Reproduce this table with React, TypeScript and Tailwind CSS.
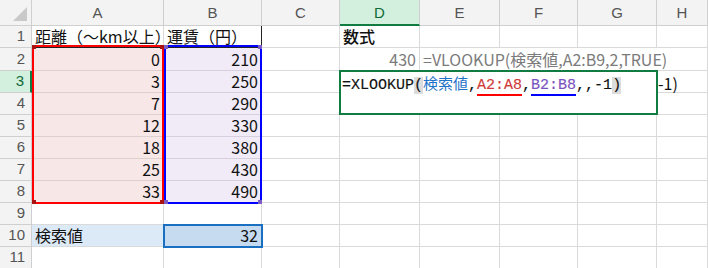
import React from "react";

const COLS = ["A", "B", "C", "D", "E", "F", "G", "H"];
const COL_W = [132, 98, 78, 80, 80, 78, 79, 51];
const ROW_H = [22, 23, 22, 22, 22, 22, 22, 22, 22, 22, 22];

const jp = "font-['Yu_Gothic','Noto_Sans_CJK_JP',sans-serif]";
const head = "font-['Liberation_Sans','Noto_Sans',sans-serif]";

type CellDef = { v?: React.ReactNode; right?: boolean; color?: string; cls?: string };

const Cell = ({ v, right, color = "text-[#111]", cls = "border-[#dadada]" }: CellDef) => (
  <div
    className={`relative flex items-end overflow-visible whitespace-nowrap border-b border-r px-[3px] pb-[1px] text-[16px] leading-[20px] ${jp} ${color} ${
      right ? "justify-end" : "justify-start"
    } ${cls}`}
  >
    {v}
  </div>
);

const pink = "bg-[#f8e7e7] border-[#dcd0d0]";
const lilac = "bg-[#f0ebf7] border-[#d6d0de]";

// cell contents keyed by "A1" style address
const cells: Record<string, CellDef> = {
  A1: { v: "距離（〜km以上）", cls: "border-[#dadada] border-b-[#222]" },
  B1: { v: "運賃（円）", cls: "border-[#222]" },
  D1: { v: "数式", color: "text-[#111] font-medium" },
  A2: { v: "0", right: true, cls: pink },
  A3: { v: "3", right: true, cls: pink },
  A4: { v: "7", right: true, cls: pink },
  A5: { v: "12", right: true, cls: pink },
  A6: { v: "18", right: true, cls: pink },
  A7: { v: "25", right: true, cls: pink },
  A8: { v: "33", right: true, cls: "bg-[#f8e7e7] border-[#dcd0d0] border-b-[#222]" },
  B2: { v: "210", right: true, cls: lilac },
  B3: { v: "250", right: true, cls: lilac },
  B4: { v: "290", right: true, cls: lilac },
  B5: { v: "330", right: true, cls: lilac },
  B6: { v: "380", right: true, cls: lilac },
  B7: { v: "430", right: true, cls: lilac },
  B8: { v: "490", right: true, cls: "bg-[#f0ebf7] border-[#d6d0de] border-b-[#222]" },
  D2: { v: "430", right: true, color: "text-[#7b7b7b]" },
  E2: {
    v: <span className="absolute bottom-[1px] left-[3px]">=VLOOKUP(検索値,A2:B9,2,TRUE)</span>,
    color: "text-[#7b7b7b]",
    cls: "border-[#dadada] border-r-transparent",
  },
  F2: { cls: "border-[#dadada] border-r-transparent" },
  G2: { cls: "border-[#dadada] border-r-transparent" },
  A10: { v: "検索値", cls: "bg-[#dce9f6] border-[#dadada]" },
  B10: { v: "32", right: true, cls: "bg-[#c6dbf0] border-[#dadada]" },
};

const Handles = ({ color }: { color: string }) => (
  <>
    <span className={`absolute -left-[2px] -top-[2px] h-[4px] w-[4px] ${color}`} />
    <span className={`absolute -right-[2px] -top-[2px] h-[4px] w-[4px] ${color}`} />
    <span className={`absolute -bottom-[2px] -left-[2px] h-[4px] w-[4px] ${color}`} />
    <span className={`absolute -bottom-[2px] -right-[2px] h-[4px] w-[4px] ${color}`} />
  </>
);

export default function App() {
  return (
    <div className="relative h-[268px] w-[708px] overflow-hidden bg-white">
      <div
        className="grid"
        style={{
          gridTemplateColumns: `32px ${COL_W.map((w) => `${w}px`).join(" ")}`,
          gridTemplateRows: `26px ${ROW_H.map((h) => `${h}px`).join(" ")}`,
        }}
      >
        {/* select-all corner */}
        <div className="relative border-b border-r border-[#cfcfcf] bg-[#f3f3f3]">
          <div className="absolute bottom-[4px] right-[4px] h-0 w-0 border-b-[14px] border-l-[14px] border-b-[#c9c9c9] border-l-transparent" />
        </div>
        {COLS.map((c) =>
          c === "D" ? (
            <div
              key={c}
              className={`flex items-center justify-center border-b-2 border-r border-b-[#107c41] border-r-[#cfcfcf] bg-[#d3efdd] pt-[2px] text-[15px] text-[#0f6b38] ${head}`}
            >
              {c}
            </div>
          ) : (
            <div
              key={c}
              className={`flex items-center justify-center border-b border-r border-[#cfcfcf] bg-[#f3f3f3] pt-[2px] text-[15px] text-[#555] ${head}`}
            >
              {c}
            </div>
          )
        )}
        {ROW_H.map((_, i) => {
          const r = i + 1;
          return (
            <React.Fragment key={r}>
              <div
                className={`flex items-center justify-end border-b pr-[6px] text-[15px] ${head} ${
                  r === 3
                    ? "border-r-2 border-[#cfcfcf] border-r-[#107c41] bg-[#d3efdd] text-[#0f6b38]"
                    : "border-r border-[#cfcfcf] bg-[#f3f3f3] text-[#555]"
                }`}
              >
                {r}
              </div>
              {COLS.map((c) => (
                <Cell key={c} {...cells[`${c}${r}`]} />
              ))}
            </React.Fragment>
          );
        })}
      </div>

      {/* reference outlines for A2:A8 and B2:B8 */}
      <div className="absolute left-[32px] top-[45px] h-[159px] w-[132px] border-2 border-[#ff0000]">
        <Handles color="bg-[#a11]" />
      </div>
      <div className="absolute left-[164px] top-[45px] h-[159px] w-[98px] border-2 border-[#0000ff]">
        <Handles color="bg-[#7b5cc4]" />
      </div>
      {/* active cell B10 */}
      <div className="absolute left-[163px] top-[224px] h-[24px] w-[100px] border-2 border-[#1a6fc0]" />

      {/* overflow of the text under the editor */}
      <div className={`absolute left-[658px] top-[73px] text-[16px] leading-[20px] text-[#111] ${jp}`}>-1)</div>

      {/* in-cell formula editor on D3 */}
      <div className="absolute left-[339px] top-[70px] h-[45px] w-[319px] border-2 border-[#107c41] bg-white">
        <div className="mt-[4px] whitespace-nowrap pl-[1px] text-[15px] leading-[20px] text-[#111] [-webkit-text-stroke:0.15px] font-['Liberation_Mono','Noto_Sans_CJK_JP',monospace]">
          <span>=XLOOKUP</span>
          <span className="bg-[#dcdcdc]">(</span>
          <span className="text-[#1f72c8] [-webkit-text-stroke:0px]">検索値</span>
          <span>,</span>
          <span className="border-b-2 border-[#ff0000] text-[#d03a3a]">A2:A8</span>
          <span>,</span>
          <span className="border-b-2 border-[#0000ff] text-[#7a52c0]">B2:B8</span>
          <span>,,-1</span>
          <span className="bg-[#dcdcdc]">)</span>
        </div>
      </div>
    </div>
  );
}
